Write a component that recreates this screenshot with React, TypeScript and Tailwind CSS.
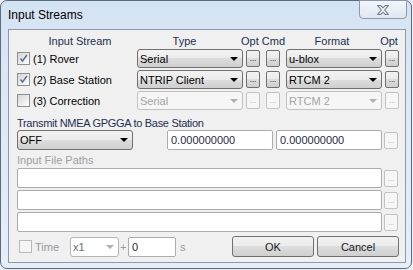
import clsx from 'clsx';

const btnGrad =
  'bg-[linear-gradient(180deg,#f2f2f2_0%,#ebebeb_50%,#dddddd_50%,#cfcfcf_100%)]';

function Check({ checked, disabled }: { checked?: boolean; disabled?: boolean }) {
  return (
    <div
      className={clsx(
        'flex h-[13px] w-[13px] shrink-0 items-center justify-center border',
        disabled
          ? 'border-[#b9b9b9] bg-[#f4f4f4]'
          : 'border-[#8e8f8f] bg-[linear-gradient(135deg,#d4d4d4,#ffffff)]'
      )}
    >
      {checked && (
        <svg width="11" height="11" viewBox="0 0 11 11">
          <path d="M2.5 5.5 L4.5 8 L9 2" fill="none" stroke="#5a6e9a" strokeWidth="1.5" />
        </svg>
      )}
    </div>
  );
}

function Combo({
  w,
  text,
  disabled,
  tall,
  light,
  className,
}: {
  w: string;
  text: string;
  disabled?: boolean;
  tall?: boolean;
  light?: boolean;
  className?: string;
}) {
  return (
    <div
      className={clsx(
        'flex shrink-0 items-center rounded-[3px] border pl-[2px] pr-[4px]',
        w,
        tall ? 'h-[20px]' : 'h-[19px]',
        disabled
          ? light
            ? 'border-[#b5b5b5] bg-white text-[#6d6d6d]'
            : 'border-[#c2c2c2] bg-[#f6f6f6] text-[#a3a3a3]'
          : clsx('border-[#707070] text-black', btnGrad),
        className
      )}
    >
      <span className="flex-1 truncate">{text}</span>
      <svg width="8" height="4" viewBox="0 0 8 4">
        <path d="M0 0h8L4 4z" fill={disabled ? '#b0b0b0' : '#000'} />
      </svg>
    </div>
  );
}

function Dots({ disabled, className }: { disabled?: boolean; className?: string }) {
  return (
    <div
      className={clsx(
        'flex h-[17px] w-[14px] shrink-0 items-end justify-center rounded-[2px] border pb-[3px] text-[8px] leading-[8px]',
        disabled ? 'border-[#c2c2c2] bg-[#f6f6f6] text-[#a8a8a8]' : clsx('border-[#707070] text-black', btnGrad),
        className
      )}
    >
      ...
    </div>
  );
}

function Field({ w, text, className }: { w: string; text?: string; className?: string }) {
  return (
    <div
      className={clsx(
        'flex h-[20px] shrink-0 items-center rounded-[2px] border border-[#ababab] bg-white pl-[3px] text-[#2a2a44]',
        w,
        className
      )}
    >
      {text}
    </div>
  );
}

const streams = [
  { label: '(1) Rover', type: 'Serial', format: 'u-blox', on: true },
  { label: '(2) Base Station', type: 'NTRIP Client', format: 'RTCM 2', on: true },
  { label: '(3) Correction', type: 'Serial', format: 'RTCM 2', on: false },
];

export default function App() {
  return (
    <div className="h-[270px] w-[413px] overflow-hidden bg-[#e9eef4] font-['Liberation_Sans',Arial,sans-serif] text-[11px] leading-[14px]">
      <div className="flex h-[269px] w-[412px] flex-col rounded-[7px] border border-[#5d6b7a] bg-[linear-gradient(180deg,#d4e3f3_0%,#dde9f6_40%,#e6eef8_100%)]">
        {/* title bar */}
        <div className="flex h-[28px] shrink-0 items-start">
          <span className="pl-[7px] pt-[6px] text-[12px] leading-[16px] text-black">Input Streams</span>
          <div className="ml-auto mr-[4px] mt-[-1px] flex h-[19px] w-[48px] items-center justify-center rounded-b-[4px] border border-[#8d99a8] bg-[linear-gradient(180deg,#f3f6fa,#dfe7f1)]">
            <svg width="12" height="10" viewBox="0 0 11 9">
              <path
                d="M0.5 0.5h3l2 2l2-2h3l-3.5 4l3.5 4h-3l-2-2l-2 2h-3l3.5-4z"
                fill="#eef1f4"
                stroke="#7a8592"
                strokeWidth="1"
              />
            </svg>
          </div>
        </div>

        {/* client area */}
        <div className="ml-[7px] h-[234px] w-[398px] border border-[#8c99a8] bg-[#f0f0f0] text-black">
          {/* header */}
          <div className="mt-[4px] flex h-[14px] pl-[8px] text-[#1e2f4e]">
            <span className="w-[126px] text-center">Input Stream</span>
            <span className="w-[83px] text-center">Type</span>
            <span className="w-[15px]" />
            <span className="w-[45px]">Opt Cmd</span>
            <span className="w-[92px] text-center">Format</span>
            <span className="w-[22px] text-center">Opt</span>
          </div>

          {/* stream rows */}
          <div className="mt-[1px] flex flex-col gap-[2px] pl-[8px]">
            {streams.map((s) => (
              <div key={s.label} className="flex h-[19px] items-center">
                <div className="flex w-[120px] items-center">
                  <Check checked={s.on} />
                  <span className="ml-[3px]">{s.label}</span>
                </div>
                <Combo w="w-[106px]" text={s.type} disabled={!s.on} />
                <Dots disabled={!s.on} className="ml-[3px]" />
                <Dots disabled={!s.on} className="ml-[6px]" />
                <Combo w="w-[96px]" text={s.format} disabled={!s.on} className="ml-[6px]" />
                <Dots disabled={!s.on} className="ml-[3px]" />
              </div>
            ))}
          </div>

          {/* NMEA */}
          <div className="mt-[6px] pl-[8px] tracking-[-0.3px] text-[#1e2f4e]">Transmit NMEA GPGGA to Base Station</div>
          <div className="flex items-center pl-[8px]">
            <Combo w="w-[116px]" text="OFF" tall />
            <Field w="w-[106px]" text="0.000000000" className="ml-[34px]" />
            <Field w="w-[106px]" text="0.000000000" className="ml-[3px]" />
            <Dots className="ml-[2px]" disabled />
          </div>

          {/* input file paths */}
          <div className="mt-[3px] pl-[8px] text-[#a0a0a0]">Input File Paths</div>
          <div className="mt-[1px] flex flex-col gap-[2px] pl-[8px]">
            {[0, 1, 2].map((i) => (
              <div key={i} className="flex items-center">
                <Field w="w-[365px]" />
                <Dots className="ml-[2px]" disabled />
              </div>
            ))}
          </div>

          {/* bottom row */}
          <div className="mt-[4px] flex h-[21px] items-center pl-[10px] text-[#9a9a9a]">
            <Check disabled />
            <span className="ml-[3px]">Time</span>
            <Combo w="w-[49px]" text="x1" disabled light tall className="ml-[11px]" />
            <span className="ml-[1px] w-[8px]">+</span>
            <Field w="w-[48px]" text="0" />
            <span className="ml-[4px]">s</span>
            <div
              className={clsx(
                'ml-auto flex h-[21px] w-[82px] items-center justify-center rounded-[3px] border border-[#707070] text-[#1a1a1a]',
                btnGrad
              )}
            >
              OK
            </div>
            <div
              className={clsx(
                'ml-[3px] mr-[6px] flex h-[21px] w-[82px] items-center justify-center rounded-[3px] border border-[#707070] text-[#1a1a1a]',
                btnGrad
              )}
            >
              Cancel
            </div>
          </div>
        </div>
      </div>
    </div>
  );
}
